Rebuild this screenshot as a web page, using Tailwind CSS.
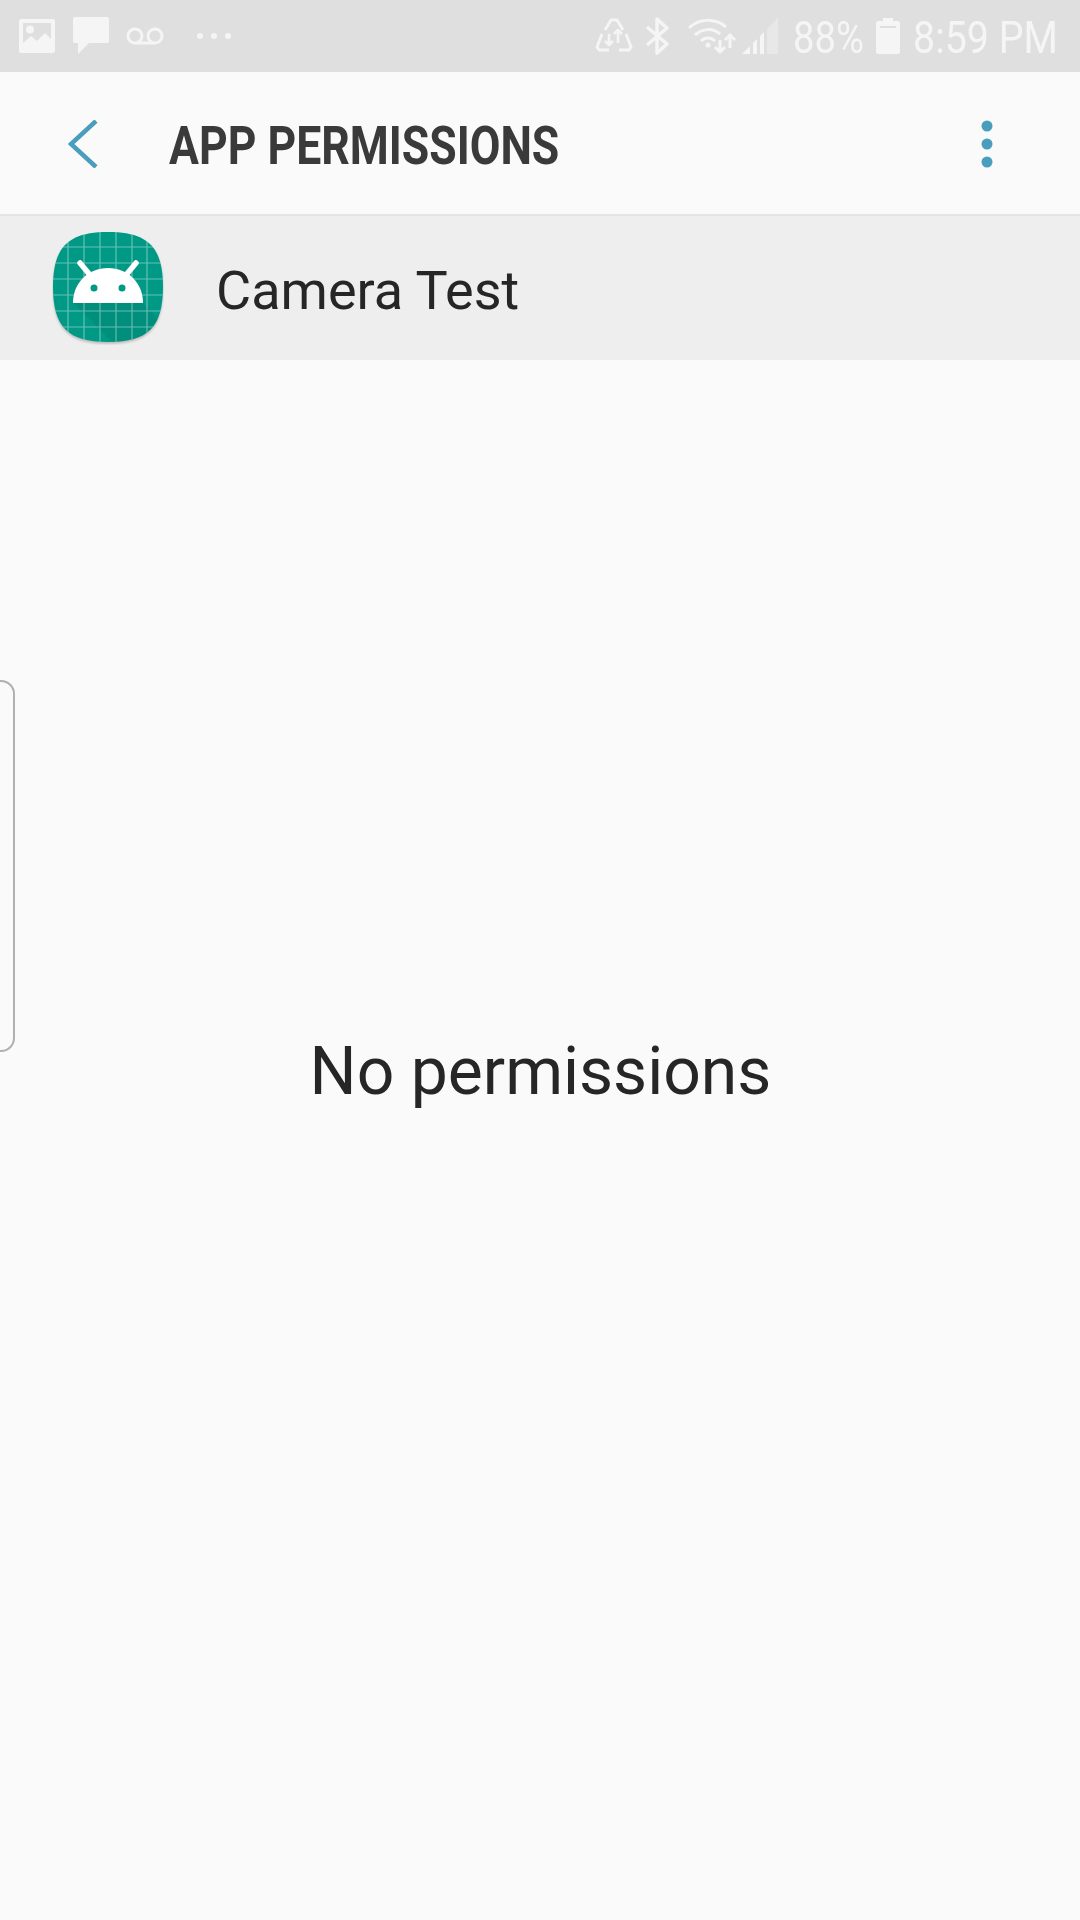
<!DOCTYPE html>
<html lang="en">
<head>
    <meta charset="UTF-8">
    <meta name="viewport" content="width=device-width, initial-scale=1.0">
    <title>App permissions</title>
    <script src="https://cdn.jsdelivr.net/npm/@tailwindcss/browser@4"></script>
</head>
<body class="font-['Roboto',sans-serif]">
    <div class="relative w-[1080px] h-[1920px] bg-[#fafafa] overflow-hidden flex flex-col">
        <!-- status bar -->
        <div class="h-[72px] shrink-0 bg-[#dfdfdf] flex items-center justify-between text-[#f5f5f5]">
            <div class="flex items-center pl-[19px]">
                <svg class="w-[36px] h-[34px]" viewBox="0 0 36 34"><path fill-rule="evenodd" fill="currentColor" d="M2 0h32a2 2 0 0 1 2 2v30a2 2 0 0 1-2 2H2a2 2 0 0 1-2-2V2a2 2 0 0 1 2-2zM4 4v20l8-7 6 5 8-8 6 6V4zM11 6.500a4 4 0 1 1 0 8 4 4 0 0 1 0-8z"/></svg>
                <svg class="w-[36px] h-[38px] ml-[18px]" viewBox="0 0 36 38"><path fill="currentColor" d="M2 0h32a2 2 0 0 1 2 2v22a2 2 0 0 1-2 2H16L5 37V26H2a2 2 0 0 1-2-2V2a2 2 0 0 1 2-2z"/></svg>
                <svg class="w-[38px] h-[18px] ml-[17px]" viewBox="0 0 38 18" fill="none" stroke="currentColor" stroke-width="3"><circle cx="9" cy="9" r="7"/><circle cx="29" cy="9" r="7"/><path d="M9 16h20"/></svg>
                <svg class="w-[35px] h-[8px] ml-[32px]" viewBox="0 0 35 8" fill="currentColor"><circle cx="4" cy="4" r="3"/><circle cx="18" cy="4" r="3"/><circle cx="32" cy="4" r="3"/></svg>
            </div>
            <div class="flex items-center pr-[23px]">
                <svg class="w-[38px] h-[36px]" viewBox="0 0 38 36" fill="none" stroke="currentColor" stroke-width="3" stroke-linejoin="round"><path d="M10 12 16 2h6l6 10M7 16 2 29l2 3h10M24 32h10l2-3-5-13"/><path stroke-width="2.500" d="M14 16v11M10 23l4 4 4-4M23 25V12M19 16l4-4 4 4"/></svg>
                <svg class="w-[25px] h-[38px] ml-[12px]" viewBox="0 0 25 38" fill="none" stroke="currentColor" stroke-width="3.500" stroke-linejoin="round"><path d="M2 10 22 27 12 36V2l10 9L2 28"/></svg>
                <svg class="w-[50px] h-[37px] ml-[17px]" viewBox="0 0 50 37" fill="none" stroke="currentColor" stroke-width="3"><path d="M2 10C12 0 28 0 39 9M8 17c8-7 18-7 25-1M14 23c4-4 10-4 14 0"/><circle cx="21" cy="27" r="2.500" fill="currentColor" stroke="none"/><path d="M33 22v12M28 29l5 5 5-5M43 30V17M38 22l5-5 5 5"/></svg>
                <svg class="w-[36px] h-[36px] ml-[5px]" viewBox="0 0 36 36" fill="currentColor"><path d="M0 36 8 28v8zM11 25l4-4v15h-4zM18 18l4-4v22h-4z"/><path opacity=".45" d="M25 11 36 0v36H25z"/></svg>
                <span class="ml-[15px] mt-[2px] w-[72px] text-[45px] leading-none whitespace-nowrap origin-left scale-x-[0.85]">88%</span>
                <svg class="w-[24px] h-[36px] ml-[11px]" viewBox="0 0 24 36" fill="currentColor"><path fill-rule="evenodd" d="M7 0h10v3h5a2 2 0 0 1 2 2v29a2 2 0 0 1-2 2H2a2 2 0 0 1-2-2V5a2 2 0 0 1 2-2h5zM4 8v2h16V8z"/></svg>
                <span class="ml-[13px] mt-[2px] w-[144px] text-[45px] leading-none whitespace-nowrap origin-left scale-x-[0.875]">8:59 PM</span>
            </div>
        </div>

        <!-- toolbar -->
        <div class="h-[142px] shrink-0 flex items-center pt-[2px]">
            <svg class="w-[30px] h-[48px] ml-[68px]" viewBox="0 0 30 48" fill="none" stroke="#4a9dbd" stroke-width="4.500"><path d="M28 1 3 24l25 23"/></svg>
            <h1 class="ml-[71px] mt-[4px] text-[54px] leading-none font-bold text-[#3a3a3a] whitespace-nowrap origin-left scale-x-[0.825]">APP PERMISSIONS</h1>
            <svg class="w-[12px] h-[48px] ml-auto mr-[87px]" viewBox="0 0 12 48" fill="#4a9dbd"><circle cx="6" cy="6" r="5.500"/><circle cx="6" cy="24" r="5.500"/><circle cx="6" cy="42" r="5.500"/></svg>
        </div>

        <!-- app row -->
        <div class="h-[146px] shrink-0 bg-[#eeeeee] border-t-2 border-[#e4e4e4] flex items-center">
            <svg class="w-[112px] h-[114px] ml-[52px]" viewBox="0 0 112 114">
                <defs>
                    <clipPath id="squircle"><path d="M56 1C96 1 111 16 111 56S96 111 56 111 1 96 1 56 16 1 56 1z"/></clipPath>
                    <filter id="soft"><feGaussianBlur stdDeviation="1"/></filter>
                </defs>
                <path fill="#bdbdbd" filter="url(#soft)" d="M56 3C96 3 111 18 111 58S96 113 56 113 1 98 1 58 16 3 56 3z"/>
                <g clip-path="url(#squircle)">
                    <rect width="112" height="112" fill="#009985"/>
                    <path fill="#00796b" opacity=".3" d="M21 72h70l21 22v18H61z"/>
                    <path stroke="#ffffff" stroke-opacity=".4" stroke-width="1.200" d="M16 0v112M32 0v112M48 0v112M64 0v112M80 0v112M95 0v112M0 16h112M0 32h112M0 48h112M0 64h112M0 80h112M0 96h112"/>
                    <path fill="#ffffff" d="M21 72c0-20 15-35 35-35s35 15 35 35z"/>
                    <path stroke="#ffffff" stroke-width="5.500" stroke-linecap="round" d="M28 32l10 12M84 32 74 44"/>
                    <circle cx="42" cy="57" r="3.500" fill="#009985"/><circle cx="70" cy="57" r="3.500" fill="#009985"/>
                </g>
            </svg>
            <span class="ml-[52px] mt-[5px] text-[54px] leading-none text-[#262626] whitespace-nowrap">Camera Test</span>
        </div>

        <!-- empty state -->
        <div class="flex-1 flex justify-center pt-[679px] pl-[1px]">
            <p class="text-[66px] leading-none text-[#262626] whitespace-nowrap">No permissions</p>
        </div>

        <!-- edge handle overlay -->
        <div class="absolute left-[-20px] top-[680px] w-[35px] h-[372px] border-2 border-[#b0b0b0] rounded-[14px]"></div>
    </div>
</body>
</html>
